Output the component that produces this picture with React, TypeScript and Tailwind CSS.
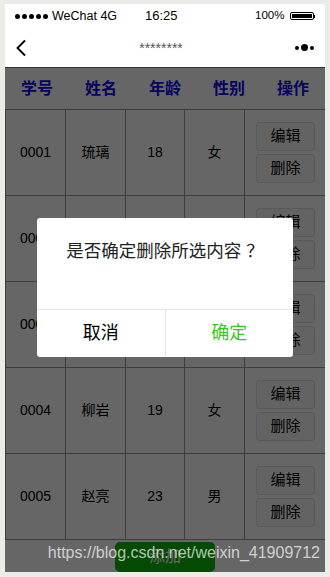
import React from "react";

type Row = { id: string; name: string; age: string; sex: string };

const rows: Row[] = [
  { id: "0001", name: "琉璃", age: "18", sex: "女" },
  { id: "0002", name: "张三", age: "20", sex: "男" },
  { id: "0003", name: "李四", age: "21", sex: "男" },
  { id: "0004", name: "柳岩", age: "19", sex: "女" },
  { id: "0005", name: "赵亮", age: "23", sex: "男" },
];

const font = { fontFamily: '"Liberation Sans", "Noto Sans CJK SC", sans-serif' };

const cols = "grid grid-cols-[61px_60px_59px_60px_80px]";

const StatusBar = () => (
  <div className="flex h-[24px] items-center px-[10px] text-[13px] text-black">
    <div className="flex w-[129px] items-center gap-[4px]">
      <div className="flex gap-[2px]">
        {[0, 1, 2, 3, 4].map((i) => (
          <span key={i} className="h-[5px] w-[5px] rounded-full bg-black" />
        ))}
      </div>
      <span className="text-[12.5px]">WeChat 4G</span>
    </div>
    <div className="flex-1 pl-[1px]">16:25</div>
    <div className="flex items-center gap-[5px]">
      <span className="text-[11.5px]">100%</span>
      <div className="flex items-center">
        <div className="flex h-[8px] w-[24px] items-center rounded-[2px] border border-black p-[1px]">
          <div className="h-full w-full bg-black" />
        </div>
        <div className="h-[3px] w-[1.5px] bg-black" />
      </div>
    </div>
  </div>
);

const NavBar = () => (
  <div className="relative flex h-[40px] items-center border-b border-[#333] px-[10px]">
    <svg width="12" height="18" viewBox="0 0 12 18">
      <path d="M10 1.5 L2.5 9 L10 16.5" fill="none" stroke="#000" strokeWidth="1.8" />
    </svg>
    <div className="flex-1 pt-[2px] text-center text-[14px] text-[#555]">********</div>
    <div className="flex items-center gap-[2px] pr-[1px]">
      <span className="h-[4px] w-[4px] rounded-full bg-black" />
      <span className="h-[7px] w-[7px] rounded-full bg-black" />
      <span className="h-[4px] w-[4px] rounded-full bg-black" />
    </div>
  </div>
);

const Table = () => (
  <div className="bg-white">
    <div className="grid h-[42px] grid-cols-5 border-b border-[#999] text-[16px] font-bold text-[#0a0aee]">
      {["学号", "姓名", "年龄", "性别", "操作"].map((h) => (
        <div key={h} className="flex items-center justify-center pt-[1px]">
          {h}
        </div>
      ))}
    </div>
    {rows.map((r) => (
      <div key={r.id} className={`${cols} h-[86px] border-b border-[#999] text-[14px] text-black`}>
        <div className="flex items-center justify-center border-r border-l border-[#999]">{r.id}</div>
        <div className="flex items-center justify-center border-r border-[#999]">{r.name}</div>
        <div className="flex items-center justify-center border-r border-[#999]">{r.age}</div>
        <div className="flex items-center justify-center border-r border-[#999]">{r.sex}</div>
        <div className="flex flex-col items-center justify-center gap-[3px] pl-[1px]">
          <button className="h-[29px] w-[59px] rounded-[4px] border border-black/10 bg-[#f8f8f8] text-[15px]">编辑</button>
          <button className="h-[29px] w-[59px] rounded-[4px] border border-black/10 bg-[#f8f8f8] text-[15px]">删除</button>
        </div>
      </div>
    ))}
    <div className="flex h-[32px] justify-center pt-[2px]">
      <button className="h-[30px] w-[100px] rounded-[5px] bg-[#09bb07] text-[16px] text-white">添加</button>
    </div>
  </div>
);

export default function App() {
  return (
    <div className="h-[577px] w-[330px] overflow-hidden bg-[#ebebe8] px-[5px] pt-[4px]" style={font}>
      <div className="relative h-[568px] w-[320px] overflow-hidden bg-white">
        <StatusBar />
        <NavBar />
        <div className="relative">
          <Table />
          <div className="absolute inset-0 bg-black/60" />
        </div>
        <div className="absolute left-[32px] top-[214px] w-[256px] overflow-hidden rounded-[3px] bg-white">
          <div className="h-[91px] pt-[20px] text-center text-[17.5px] text-[#222]">是否确定删除所选内容 ？</div>
          <div className="flex h-[48px] border-t border-[#e5e5e5] text-[18px]">
            <div className="flex flex-1 items-center justify-center border-r border-[#e5e5e5] text-black">取消</div>
            <div className="flex flex-1 items-center justify-center text-[#3cc51f]">确定</div>
          </div>
        </div>
        <div className="absolute bottom-[7px] right-[5px] text-[16px] text-white/70">
          https://blog.csdn.net/weixin_41909712
        </div>
      </div>
    </div>
  );
}
